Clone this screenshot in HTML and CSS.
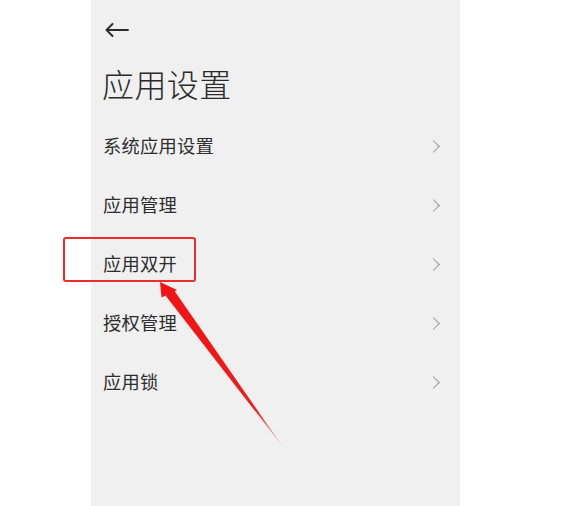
FILE: index.html
```html
<!DOCTYPE html>
<html lang="zh-CN">
<head>
<meta charset="utf-8">
<title>应用设置</title>
<link rel="stylesheet" href="styles.css">
</head>
<body>
<div class="stage">
  <div class="panel">
    <div class="topbar">
      <svg class="back" width="24" height="14" viewBox="0 0 24 14">
        <path d="M1.5 7 H23 M7.5 1 L1.5 7 L7.5 13" fill="none" stroke="#2a2a2a" stroke-width="1.9" stroke-linecap="round" stroke-linejoin="round"/>
      </svg>
    </div>
    <h1 class="title">应用设置</h1>
    <ul class="list">
      <li class="item"><span class="label">系统应用设置</span><span class="chev"></span></li>
      <li class="item"><span class="label">应用管理</span><span class="chev"></span></li>
      <li class="item"><span class="label">应用双开</span><span class="chev"></span></li>
      <li class="item"><span class="label">授权管理</span><span class="chev"></span></li>
      <li class="item"><span class="label">应用锁</span><span class="chev"></span></li>
    </ul>
  </div>
  <div class="highlight"></div>
  <svg class="annot" width="580" height="506" viewBox="0 0 580 506">
    <defs>
      <linearGradient id="fade" x1="170" y1="293" x2="283" y2="447" gradientUnits="userSpaceOnUse">
        <stop offset="0" stop-color="#f21414"/>
        <stop offset="0.75" stop-color="#f01a1a"/>
        <stop offset="1" stop-color="#f05050" stop-opacity="0.3"/>
      </linearGradient>
    </defs>
    <polygon points="160,282 161.5,297.5 177,290" fill="#f21414"/>
    <polygon points="173.5,289.5 165.5,295.5 283,447" fill="url(#fade)"/>
  </svg>
</div>
</body>
</html>
```

FILE: styles.css
```css
html, body {
  margin: 0;
  padding: 0;
  background: #ffffff;
}

.stage {
  position: relative;
  width: 580px;
  height: 506px;
  overflow: hidden;
  font-family: "Noto Sans CJK SC", "Noto Sans", sans-serif;
}

.panel {
  box-sizing: border-box;
  width: 369px;
  height: 506px;
  margin-left: 91px;
  background: #f0f0f0;
  padding: 0 17px 0 12px;
  display: flex;
  flex-direction: column;
}

.topbar {
  height: 58px;
  display: flex;
  align-items: center;
  padding-left: 2px;
}

.back {
  display: block;
  margin-top: 1px;
}

.title {
  margin: 0 0 0 -1px;
  box-sizing: border-box;
  height: 54px;
  line-height: 50px;
  padding-bottom: 4px;
  font-size: 32px;
  font-weight: 300;
  color: #2a2a2a;
  letter-spacing: 0.4px;
}

.list {
  list-style: none;
  margin: 0;
  padding: 3.5px 0 0 0;
}

.item {
  height: 59px;
  display: flex;
  align-items: center;
  justify-content: space-between;
}

.label {
  font-size: 18.3px;
  line-height: 24px;
  color: #2e2e2e;
  letter-spacing: 0.2px;
}

.chev {
  width: 8px;
  height: 8px;
  border-top: 1.6px solid #9a9a9a;
  border-right: 1.6px solid #9a9a9a;
  transform: rotate(45deg);
  margin: 2px 5px 0 0;
}

.highlight {
  position: absolute;
  left: 63px;
  top: 237px;
  width: 133px;
  height: 45px;
  box-sizing: border-box;
  border: 2.5px solid #ee2b2b;
  border-radius: 3px;
}

.annot {
  position: absolute;
  left: 0;
  top: 0;
  pointer-events: none;
}
```
